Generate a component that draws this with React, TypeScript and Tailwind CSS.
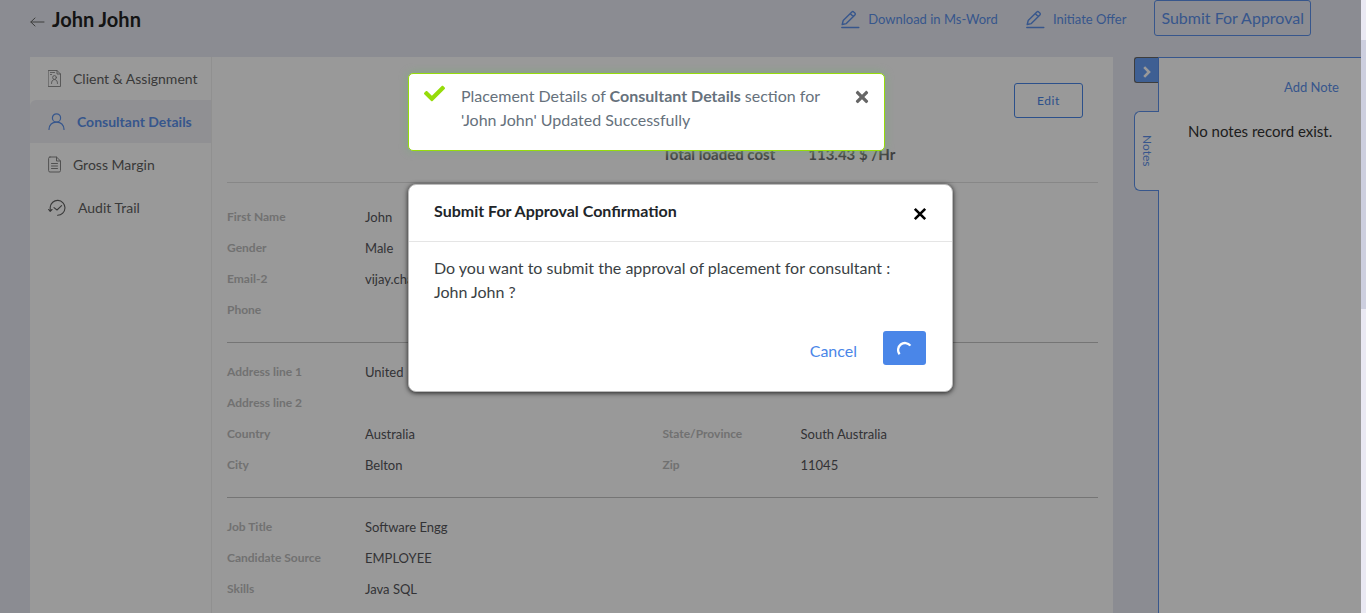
import React from "react";
import { FaCheck, FaTimes } from "react-icons/fa";

const stroke = { fill: "none", stroke: "currentColor", strokeLinecap: "round", strokeLinejoin: "round" } as const;

function ArrowLeftIcon() {
  return (
    <svg viewBox="0 0 15 12" className="h-3 w-[15px]" {...stroke} strokeWidth="1">
      <path d="M14 6H1M5 2L.8 6 5 10" />
    </svg>
  );
}

function PencilIcon() {
  return (
    <svg viewBox="0 0 19 19" className="h-[19px] w-[19px] shrink-0" {...stroke} strokeWidth="1.4">
      <path d="M1.200 14.500l1-4L10.800 1.900a1.300 1.300 0 0 1 1.900 0l1.200 1.200a1.300 1.300 0 0 1 0 1.900L5.300 13.600zM9.200 3.500l3 3" />
      <path d="M.8 17.500h17" />
    </svg>
  );
}

function ResumeIcon() {
  return (
    <svg viewBox="0 0 13 17" className="h-[17px] w-[13px] shrink-0 text-[#888]" {...stroke} strokeWidth="0.9">
      <path d="M.5.5h8.500l3.500 3.500v12.500H.5zM9 .5V4h3.500" />
      <path d="M2.500 2.500h1M4.500 2.500h2M2.500 4.500h1" />
      <circle cx="6.500" cy="7.500" r="1.900" />
      <path d="M3.500 13.500c0-2.300 1-3.900 3-3.900s3 1.600 3 3.900" />
    </svg>
  );
}

function UserIcon() {
  return (
    <svg viewBox="0 0 17 17" className="h-[17px] w-[17px] shrink-0" {...stroke} strokeWidth="1.2">
      <circle cx="8.500" cy="4.900" r="4.100" />
      <path d="M1 16.400c.3-4.200 3-7.300 7.500-7.300s7.200 3.100 7.500 7.300" />
    </svg>
  );
}

function DocumentIcon() {
  return (
    <svg viewBox="0 0 13 17" className="h-[17px] w-[13px] shrink-0 text-[#888]" {...stroke} strokeWidth="1">
      <path d="M2 1h6.500l4 4v9.600a1.400 1.400 0 0 1-1.400 1.400H2A1.400 1.400 0 0 1 .6 14.600V2.400A1.400 1.400 0 0 1 2 1zM8.500 1v4h4" />
      <path d="M3.500 7.500h6M3.500 10h6M3.500 12.500h6" />
    </svg>
  );
}

function HistoryIcon() {
  return (
    <svg viewBox="0 0 18 17" className="h-[17px] w-[18px] shrink-0" {...stroke} strokeWidth="1.1">
      <path d="M2.200 11.500V8.200a7.400 7.400 0 1 1 7.400 8M.6 10.500l1.600 1.800L4 10.500" />
      <path d="M6 8.600l3 2.400 4.600-4.300" />
    </svg>
  );
}

function ChevronIcon() {
  return (
    <svg viewBox="0 0 8 12" className="h-3 w-2" fill="none" stroke="currentColor" strokeWidth="2.6">
      <path d="M1.200 1.200L6 6l-4.800 4.800" />
    </svg>
  );
}

const menu = [
  { label: "Client & Assignment", icon: <ResumeIcon />, active: false },
  { label: "Consultant Details", icon: <UserIcon />, active: true },
  { label: "Gross Margin", icon: <DocumentIcon />, active: false },
  { label: "Audit Trail", icon: <HistoryIcon />, active: false },
];

type FieldData = [label: string, value: string] | null;

const sections: FieldData[][] = [
  [["First Name", "John"], null, ["Gender", "Male"], null, ["Email-2", "vijay.cha"], null, ["Phone", ""], null],
  [
    ["Address line 1", "United"], null,
    ["Address line 2", ""], null,
    ["Country", "Australia"], ["State/Province", "South Australia"],
    ["City", "Belton"], ["Zip", "11045"],
  ],
  [["Job Title", "Software Engg"], null, ["Candidate Source", "EMPLOYEE"], null, ["Skills", "Java SQL"], null],
];

function Section({ fields }: { fields: FieldData[] }) {
  return (
    <dl className="grid grid-cols-2 border-t border-[#c4c4c4] pt-[14px] pb-4 text-[13px] first:border-[#e2e2e2] first:pt-[19px]">
      {fields.map((field, i) =>
        field ? (
          <div key={i} className="flex h-[31px] items-center">
            <dt className="w-[138px] shrink-0 pb-[2px] text-[12px] font-bold text-[#bdbdbd]">{field[0]}</dt>
            <dd className="text-[#55555a]">{field[1]}</dd>
          </div>
        ) : (
          <div key={i} />
        )
      )}
    </dl>
  );
}

export default function App() {
  return (
    <div className="flex h-screen overflow-hidden bg-[#e8eaf3] font-['Lato',sans-serif] text-[#333]">
      <div className="relative flex min-w-0 flex-1 flex-col">
        <header className="flex h-[57px] shrink-0 items-start pr-[50px] pl-[30px]">
          <a href="#back" aria-label="Back" className="mt-4 text-[#666]">
            <ArrowLeftIcon />
          </a>
          <h1 className="mt-[6px] ml-[7px] text-[20px] leading-[26px] font-bold text-[#222]">John John</h1>
          <nav className="ml-auto flex items-start text-[13px] text-[#5c90ea]">
            <a href="#word" className="mt-[10px] flex items-center gap-2">
              <PencilIcon />
              Download in Ms-Word
            </a>
            <a href="#offer" className="mt-[10px] ml-7 flex items-center gap-2">
              <PencilIcon />
              Initiate Offer
            </a>
            <button className="ml-7 h-9 rounded-[3px] border border-[#5c90ea] px-[6px] text-[16px]">Submit For Approval</button>
          </nav>
        </header>

        <div className="flex min-h-0 flex-1 pl-[30px]">
          <aside className="w-[182px] shrink-0 border-r border-[#f0f0f0] bg-white">
            {menu.map((item) => (
              <a
                key={item.label}
                href="#section"
                className={
                  item.active
                    ? "flex h-[43px] items-center gap-3 rounded-tl-md bg-[#f0f1f6] pl-[18px] text-[14px] font-bold text-[#5c90ea]"
                    : "flex h-[43px] items-center gap-3 pl-[18px] text-[14px] text-[#5f5f5f]"
                }
              >
                {item.icon}
                {item.label}
              </a>
            ))}
          </aside>

          <main className="min-w-0 flex-1 overflow-hidden bg-white px-[15px]">
            <div className="flex h-[125px] flex-col">
              <button className="mt-[26px] mr-[15px] h-[35px] w-[69px] self-end rounded-[3px] border border-[#4a86e8] text-[12px] tracking-wider text-[#4a86e8]">
                Edit
              </button>
              <div className="mt-[25px] ml-[50%] flex gap-[33px] text-[15px] font-bold text-[#6c6c6c]">
                <span>Total loaded cost</span>
                <span>113.43 $ /Hr</span>
              </div>
            </div>
            <div>
              {sections.map((fields, i) => (
                <Section key={i} fields={fields} />
              ))}
            </div>
          </main>

          <div className="ml-[21px] flex w-6 shrink-0 flex-col text-[#5c90ea]">
            <button
              aria-label="Collapse notes"
              className="flex h-[26px] items-center justify-center rounded-l-[3px] border border-r-0 border-[#666] bg-[#689ff6] pt-1 text-white"
            >
              <ChevronIcon />
            </button>
            <button className="relative z-10 -mr-px mt-7 flex h-20 items-center justify-center rounded-l-md border border-r-0 border-[#5c90ea] bg-white text-[12px]">
              <span className="[writing-mode:vertical-rl]">Notes</span>
            </button>
          </div>
          <section className="flex w-[203px] shrink-0 flex-col border-t border-l border-[#5c90ea] bg-white">
            <a href="#add" className="mt-[19px] mr-[22px] self-end text-[13px] leading-5 text-[#5c90ea]">
              Add Note
            </a>
            <p className="mt-[23px] ml-[29px] text-[15px] leading-[22px] whitespace-nowrap">No notes record exist.</p>
          </section>
        </div>

        <div className="absolute inset-0 z-20 bg-black/40" />

        <div
          role="status"
          className="absolute top-[73px] left-[408px] z-40 flex w-[477px] items-start rounded-[5px] border border-[#96dc0a] bg-white pt-[10px] pr-[13px] pb-[18px] pl-[15px] text-[16px] leading-6 text-[#66717c] shadow-[0_0_10px_#82a882]"
        >
          <FaCheck className="-mt-px h-[21px] w-[21px] shrink-0 text-[#96dc0a]" />
          <p className="ml-4 flex-1">
            Placement Details of <strong className="font-bold">Consultant Details</strong> section for
            <br />
            'John John' Updated Successfully
          </p>
          <button aria-label="Dismiss" className="mt-1 text-[18px] text-[#666]">
            <FaTimes />
          </button>
        </div>

        <div
          role="dialog"
          aria-labelledby="dialog-title"
          className="absolute top-[184px] left-[408px] z-30 w-[545px] rounded-lg border border-[#bbb] bg-white text-[#212529] shadow-[0_1px_5px_rgba(0,0,0,0.8)]"
        >
          <div className="flex h-[57px] items-center justify-between border-b border-[#e5e5e5] px-[25px]">
            <h2 id="dialog-title" className="pb-1 text-[16px] leading-6 font-bold">
              Submit For Approval Confirmation
            </h2>
            <button aria-label="Close" className="pt-px text-black">
              <svg viewBox="0 0 14 14" className="h-[14px] w-[14px]" fill="none" stroke="currentColor" strokeWidth="2.6">
                <path d="M1.800 1.800l10.400 10.400M12.200 1.800L1.800 12.200" />
              </svg>
            </button>
          </div>
          <p className="px-[25px] pt-[14px] text-[16px] leading-6 text-[#3a3f44]">
            Do you want to submit the approval of placement for consultant :
            <br />
            John John ?
          </p>
          <div className="flex items-center justify-end gap-[26px] px-[26px] pt-[27px] pb-[26px]">
            <button className="pt-[6px] text-[16px] text-[#4a86e8]">Cancel</button>
            <button aria-label="Submitting" className="flex h-[34px] w-[43px] items-center justify-center rounded-[3px] bg-[#4a86e8] text-white">
              <svg viewBox="0 0 16 16" className="h-4 w-4" fill="none" stroke="currentColor" strokeWidth="2.3">
                <path d="M2.600 14.200A6.200 6.200 0 0 1 13.400 5.600" />
              </svg>
            </button>
          </div>
        </div>
      </div>
      <div className="w-[5px] shrink-0 bg-[#eae9f3] pt-10">
        <div className="h-[269px] bg-[#cdcfdf]" />
      </div>
    </div>
  );
}
